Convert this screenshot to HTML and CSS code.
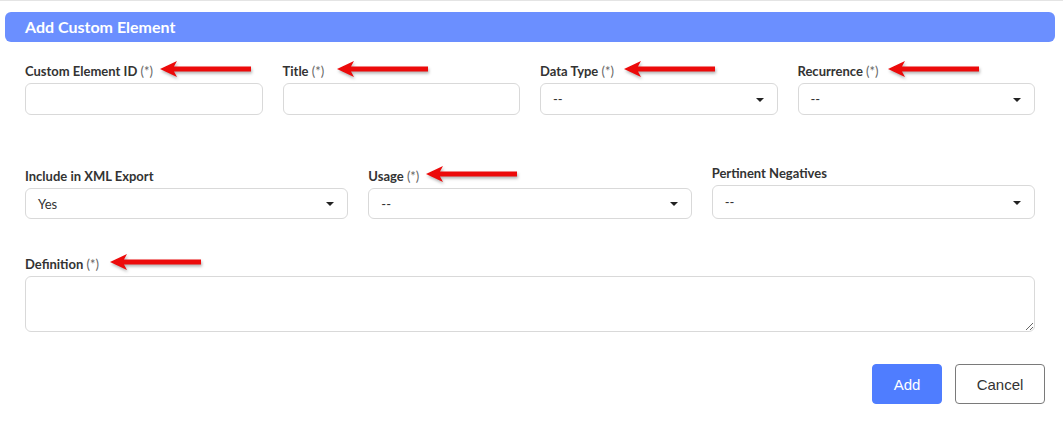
FILE: index.html
```html
<!DOCTYPE html>
<html lang="en">
<head>
<meta charset="utf-8">
<title>Add Custom Element</title>
<link rel="stylesheet" href="styles.css">
</head>
<body>
<div class="modal">
  <div class="modal-header"><h2 class="modal-title">Add Custom Element</h2></div>
  <form class="form">
    <div class="row row-4">
      <div class="field">
        <div class="label"><span class="label-text">Custom Element ID <span class="req">(*)</span></span><svg class="arrow arrow-a" width="94" height="20" viewBox="0 0 94 20"><path d="M1 9 L18 1 L15 6.5 L92 6.5 L92 11.5 L15 11.5 L18 17 Z"/></svg></div>
        <input class="input" type="text">
      </div>
      <div class="field">
        <div class="label"><span class="label-text">Title <span class="req">(*)</span></span><svg class="arrow arrow-b" width="94" height="20" viewBox="0 0 94 20"><path d="M1 9 L18 1 L15 6.5 L92 6.5 L92 11.5 L15 11.5 L18 17 Z"/></svg></div>
        <input class="input" type="text">
      </div>
      <div class="field">
        <div class="label"><span class="label-text">Data Type <span class="req">(*)</span></span><svg class="arrow arrow-c" width="94" height="20" viewBox="0 0 94 20"><path d="M1 9 L18 1 L15 6.5 L92 6.5 L92 11.5 L15 11.5 L18 17 Z"/></svg></div>
        <div class="select select-32"><span class="select-value">--</span><span class="caret"></span></div>
      </div>
      <div class="field">
        <div class="label"><span class="label-text">Recurrence <span class="req">(*)</span></span><svg class="arrow arrow-c" width="94" height="20" viewBox="0 0 94 20"><path d="M1 9 L18 1 L15 6.5 L92 6.5 L92 11.5 L15 11.5 L18 17 Z"/></svg></div>
        <div class="select select-32"><span class="select-value">--</span><span class="caret"></span></div>
      </div>
    </div>

    <div class="row row-3">
      <div class="field">
        <div class="label label-tall"><span class="label-text">Include in XML Export</span></div>
        <div class="select select-31"><span class="select-value">Yes</span><span class="caret"></span></div>
      </div>
      <div class="field">
        <div class="label"><span class="label-text">Usage <span class="req">(*)</span></span><svg class="arrow arrow-a" width="94" height="20" viewBox="0 0 94 20"><path d="M1 9 L18 1 L15 6.5 L92 6.5 L92 11.5 L15 11.5 L18 17 Z"/></svg></div>
        <div class="select select-31"><span class="select-value">--</span><span class="caret"></span></div>
      </div>
      <div class="field">
        <div class="label"><span class="label-text">Pertinent Negatives</span></div>
        <div class="select select-34"><span class="select-value">--</span><span class="caret"></span></div>
      </div>
    </div>

    <div class="row row-1">
      <div class="field">
        <div class="label"><span class="label-text">Definition <span class="req">(*)</span></span><svg class="arrow arrow-d" width="94" height="20" viewBox="0 0 94 20"><path d="M1 9 L18 1 L15 6.5 L92 6.5 L92 11.5 L15 11.5 L18 17 Z"/></svg></div>
        <textarea class="textarea"></textarea>
      </div>
    </div>
  </form>
  <div class="actions">
    <button class="btn btn-primary" type="button">Add</button>
    <button class="btn btn-secondary" type="button">Cancel</button>
  </div>
</div>
</body>
</html>
```

FILE: styles.css
```css
html, body {
  margin: 0;
  padding: 0;
  background: #ffffff;
}

body {
  font-family: Lato, "Open Sans", Arial, sans-serif;
  color: #333333;
  border-top: 1px solid #e4e4e4;
  height: 437px;
  overflow: hidden;
}

.modal {
  display: flex;
  flex-direction: column;
}

.modal-header {
  margin: 11px 8px 0 5px;
  height: 30px;
  background: #6b8fff;
  border-radius: 6px;
  display: flex;
  align-items: center;
}

.modal-title {
  margin: 0;
  padding-left: 20px;
  font-size: 16px;
  font-weight: 700;
  color: #ffffff;
  line-height: 30px;
}

.form {
  padding: 18px 28px 0 25px;
  display: flex;
  flex-direction: column;
}

.row {
  display: grid;
  column-gap: 20px;
  align-items: start;
}

.row-4 {
  grid-template-columns: repeat(4, 1fr);
}

.row-3 {
  grid-template-columns: repeat(3, 1fr);
  margin-top: 50px;
}

.row-1 {
  grid-template-columns: 1fr;
  margin-top: 34px;
}

.field {
  display: flex;
  flex-direction: column;
  min-width: 0;
}

.label {
  display: flex;
  align-items: flex-end;
  margin-bottom: 3px;
}

.label-tall {
  height: 20px;
}

.label-text {
  font-size: 13px;
  line-height: 17px;
  font-weight: 700;
  color: #333333;
  white-space: nowrap;
}

.req {
  font-weight: 400;
  color: #666666;
}

.arrow {
  display: block;
  margin-left: 6px;
  overflow: visible;
  fill: #ec0a0a;
  filter: drop-shadow(1px 2px 1.5px rgba(0, 0, 0, 0.3));
}

.arrow-a { margin-left: 6px; }
.arrow-b { margin-left: 12px; }
.arrow-c { margin-left: 9px; }
.arrow-d { margin-left: 10px; }

.input {
  box-sizing: border-box;
  width: 100%;
  height: 32px;
  margin: 0;
  border: 1px solid #d9d9d9;
  border-radius: 6px;
  background: #ffffff;
  font-family: inherit;
  font-size: 13px;
  padding: 0 12px;
  outline: none;
}

.select {
  box-sizing: border-box;
  width: 100%;
  border: 1px solid #d9d9d9;
  border-radius: 6px;
  background: #ffffff;
  display: flex;
  align-items: center;
  justify-content: space-between;
  padding: 0 13px 0 12px;
}

.select-32 { height: 32px; }
.select-31 { height: 31px; }
.select-34 { height: 34px; }

.select-value {
  font-size: 13px;
  color: #333333;
  line-height: 16px;
}

.caret {
  width: 0;
  height: 0;
  border-left: 4px solid transparent;
  border-right: 4px solid transparent;
  border-top: 4px solid #222222;
  margin-top: 1px;
}

.textarea {
  box-sizing: border-box;
  display: block;
  width: 100%;
  height: 56px;
  margin: 0;
  border: 1px solid #d9d9d9;
  border-radius: 6px;
  background: #ffffff;
  font-family: inherit;
  font-size: 13px;
  padding: 6px 12px;
  resize: vertical;
  outline: none;
}

.actions {
  display: flex;
  justify-content: flex-end;
  gap: 13px;
  margin-top: 32px;
  padding-right: 18px;
}

.btn {
  box-sizing: border-box;
  height: 40px;
  border-radius: 4px;
  font-family: "Liberation Sans", Arial, sans-serif;
  font-size: 15px;
  padding: 0;
  cursor: pointer;
}

.btn-primary {
  width: 70px;
  background: #4f7dff;
  border: 1px solid #4f7dff;
  color: #ffffff;
}

.btn-secondary {
  width: 90px;
  background: #ffffff;
  border: 1px solid #7a7a7a;
  color: #333333;
}
```
